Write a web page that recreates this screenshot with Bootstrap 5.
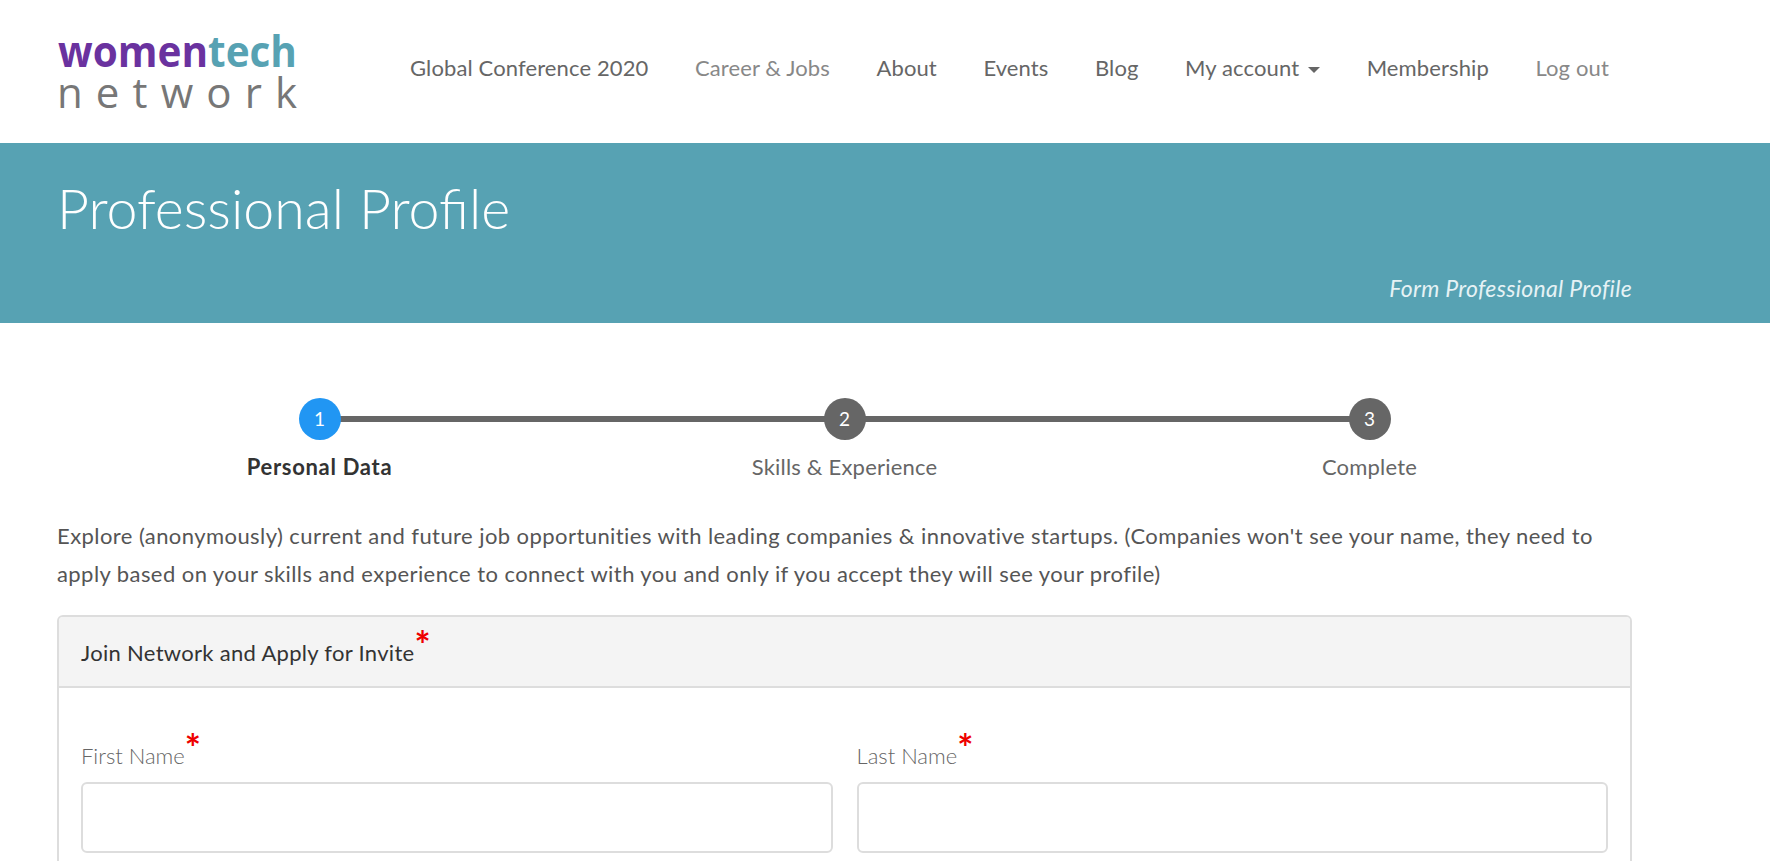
<!DOCTYPE html>
<html lang="en">
<head>
  <meta charset="UTF-8" />
  <meta name="viewport" content="width=device-width, initial-scale=1.0"/>
  <title>Professional Profile - womentech network</title>
  <link href="https://cdn.jsdelivr.net/npm/bootstrap@5.3.2/dist/css/bootstrap.min.css" rel="stylesheet">
  <style>
    html, body { height: 100%; overflow: hidden; }
    body { font-family: "Lato", "Liberation Sans", sans-serif; font-size: 22px; color: #555; }

    .wt-header { height: 143px; padding: 0 0 0 57px; }
    .wt-logo { display: block; padding: 0; margin: 0 91px 0 0; }
    .wt-logo svg { display: block; }
    .wt-nav { gap: 46.5px; margin-bottom: 8px; }
    .navbar-expand .wt-nav .nav-link { padding: 0; color: #666; font-size: 22px; letter-spacing: .12px; }
    .navbar-expand .wt-nav .nav-link.wt-muted { color: #888; }
    .wt-caret { display: inline-block; margin-left: 9px; vertical-align: 3px; border-top: 6px solid #666; border-left: 6px solid transparent; border-right: 6px solid transparent; }

    .wt-banner { height: 180px; background: #57a2b3; color: #fff; padding: 0 138px 0 57px; }
    .wt-banner h1 { font-size: 55.5px; font-weight: 300; margin: 0; padding-top: 32px; line-height: 1.2; }
    .wt-crumb { font-style: italic; font-size: 23px; letter-spacing: .3px; color: #e6f2f5; line-height: 1; margin-bottom: 23px; }

    .wt-main { padding: 0 138px 0 57px; }

    .wt-steps { margin: 0; padding: 75px 0 0; }
    .wt-step { flex: 1 1 0; position: relative; text-align: center; font-size: 22px; letter-spacing: .2px; color: #666; }
    .wt-step.active { font-weight: 700; color: #333; letter-spacing: .7px; }
    .wt-dot { position: relative; z-index: 1; width: 42px; height: 42px; margin: 0 auto 10px; border-radius: 50%; background: #666; color: #fff; font-size: 19px; font-weight: 400; line-height: 42px; letter-spacing: 0; }
    .wt-step.active .wt-dot { background: #2196f3; }
    .wt-step:not(:last-child)::after { content: ""; position: absolute; top: 18px; left: 50%; width: 100%; height: 6px; background: #666; }

    .wt-intro { margin: 34px 0 22px; line-height: 38px; letter-spacing: .43px; color: #555; }

    .wt-card { --bs-card-border-color: #ddd; --bs-card-border-width: 2px; --bs-card-border-radius: 6px; --bs-card-inner-border-radius: 4px; }
    .wt-card .card-header { height: 71px; padding: 0 22px; background: #f4f4f4; color: #333; font-size: 22px; letter-spacing: .3px; line-height: 72px; }
    .wt-card .card-body { padding: 50px 22px 60px; }
    .wt-req { color: #e00; font-size: 38px; font-weight: 700; line-height: 0; letter-spacing: 0; position: relative; top: -2px; }
    .wt-label { color: #666; font-weight: 300; font-size: 22px; margin-bottom: 8px; line-height: 36px; display: block; }
    .wt-input.form-control { height: 71px; border: 2px solid #ddd; border-radius: 6px; }
    .wt-cols { --bs-gutter-x: 24px; }
  </style>
</head>
<body>

  <!-- NAVIGATION BAR -->
  <nav class="navbar navbar-expand bg-white wt-header">
    <a class="navbar-brand wt-logo" href="#">
      <svg width="262" height="110" viewBox="0 0 262 110" role="img" aria-label="womentech network">
        <text x="1" y="50" font-family="Open Sans, sans-serif" font-size="43" font-weight="700" textLength="239" lengthAdjust="spacingAndGlyphs" fill="#6a329f">women<tspan fill="#57a2b3">tech</tspan></text>
        <text x="0" y="91" font-family="Open Sans, sans-serif" font-size="42" font-weight="500" textLength="240" fill="#777">network</text>
      </svg>
    </a>
    <ul class="navbar-nav wt-nav align-items-center">
      <li class="nav-item"><a class="nav-link" href="#">Global Conference 2020</a></li>
      <li class="nav-item"><a class="nav-link wt-muted" href="#">Career &amp; Jobs</a></li>
      <li class="nav-item"><a class="nav-link" href="#">About</a></li>
      <li class="nav-item"><a class="nav-link" href="#">Events</a></li>
      <li class="nav-item"><a class="nav-link" href="#">Blog</a></li>
      <li class="nav-item"><a class="nav-link" href="#">My account<span class="wt-caret"></span></a></li>
      <li class="nav-item"><a class="nav-link" href="#">Membership</a></li>
      <li class="nav-item"><a class="nav-link wt-muted" href="#">Log out</a></li>
    </ul>
  </nav>

  <!-- PAGE TITLE -->
  <header class="wt-banner d-flex flex-column justify-content-between">
    <h1>Professional Profile</h1>
    <div class="wt-crumb text-end">Form Professional Profile</div>
  </header>

  <main class="wt-main">
    <!-- STEPS -->
    <ol class="wt-steps list-unstyled d-flex">
      <li class="wt-step active"><div class="wt-dot">1</div>Personal Data</li>
      <li class="wt-step"><div class="wt-dot">2</div>Skills &amp; Experience</li>
      <li class="wt-step"><div class="wt-dot">3</div>Complete</li>
    </ol>

    <p class="wt-intro">Explore (anonymously) current and future job opportunities with leading companies &amp; innovative startups. (Companies won't see your name, they need to apply based on your skills and experience to connect with you and only if you accept they will see your profile)</p>

    <!-- FORM -->
    <div class="card wt-card">
      <div class="card-header">Join Network and Apply for Invite<span class="wt-req">*</span></div>
      <div class="card-body">
        <div class="row wt-cols">
          <div class="col-6">
            <label class="wt-label" for="firstName">First Name<span class="wt-req">*</span></label>
            <input class="form-control wt-input" id="firstName" type="text">
          </div>
          <div class="col-6">
            <label class="wt-label" for="lastName">Last Name<span class="wt-req">*</span></label>
            <input class="form-control wt-input" id="lastName" type="text">
          </div>
        </div>
      </div>
    </div>
  </main>

  <script src="https://cdn.jsdelivr.net/npm/bootstrap@5.3.2/dist/js/bootstrap.bundle.min.js"></script>
</body>
</html>
